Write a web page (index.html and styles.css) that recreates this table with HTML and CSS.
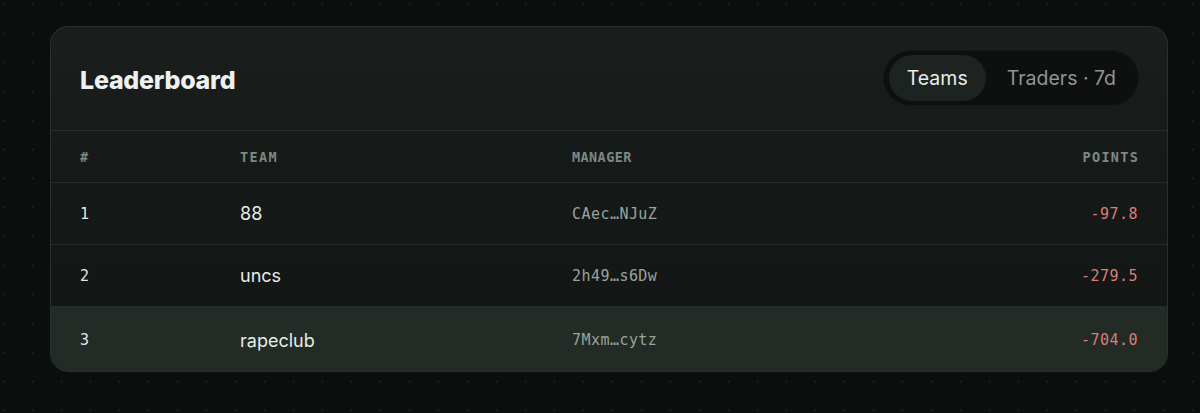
FILE: index.html
```html
<!DOCTYPE html>
<html lang="en">
<head>
<meta charset="utf-8">
<title>Leaderboard</title>
<link rel="stylesheet" href="styles.css">
</head>
<body>
<main class="page">
  <section class="card">
    <header class="card-head">
      <h1 class="title">Leaderboard</h1>
      <div class="toggle">
        <button class="tab active">Teams</button>
        <button class="tab">Traders · 7d</button>
      </div>
    </header>
    <div class="table">
      <div class="row head">
        <span class="c-rank">#</span>
        <span class="c-team">Team</span>
        <span class="c-mgr">Manager</span>
        <span class="c-pts">Points</span>
      </div>
      <div class="row">
        <span class="c-rank">1</span>
        <span class="c-team">88</span>
        <span class="c-mgr">CAec…NJuZ</span>
        <span class="c-pts neg">-97.8</span>
      </div>
      <div class="row">
        <span class="c-rank">2</span>
        <span class="c-team">uncs</span>
        <span class="c-mgr">2h49…s6Dw</span>
        <span class="c-pts neg">-279.5</span>
      </div>
      <div class="row mine">
        <span class="c-rank">3</span>
        <span class="c-team">rapeclub</span>
        <span class="c-mgr">7Mxm…cytz</span>
        <span class="c-pts neg">-704.0</span>
      </div>
    </div>
  </section>
</main>
</body>
</html>
```

FILE: styles.css
```css
* { box-sizing: border-box; }
html, body { margin: 0; padding: 0; }
body {
  width: 1200px;
  height: 413px;
  overflow: hidden;
  background-color: #0c0e0d;
  background-image: radial-gradient(circle, rgba(255,255,255,0.07) 0.9px, transparent 1.4px);
  background-size: 29px 29px;
  background-position: -11px -10px;
  font-family: Inter, "Noto Sans", sans-serif;
}
.page {
  padding: 26px 32px 0 50px;
}
.card {
  width: 1118px;
  border: 1px solid #2a312d;
  border-radius: 18px;
  background: linear-gradient(180deg, #1a1f1d 0%, #151917 45%, #121513 100%);
  overflow: hidden;
}
.card-head {
  height: 104px;
  display: flex;
  align-items: center;
  justify-content: space-between;
  padding: 0 28px 0 29px;
  border-bottom: 1px solid #272e2a;
}
.title {
  margin: 0;
  font-size: 25px;
  font-weight: 800;
  letter-spacing: -0.01em;
  color: #eef1ef;
  padding-top: 2px;
}
.toggle {
  display: flex;
  align-items: center;
  height: 56px;
  padding: 5px;
  border-radius: 28px;
  background: #0d100f;
  border: 1px solid #141816;
  margin-top: -2px;
}
.tab {
  height: 46px;
  border: 0;
  border-radius: 23px;
  background: transparent;
  font-family: Inter, "Noto Sans", sans-serif;
  font-size: 19.5px;
  font-weight: 400;
  color: #8d9792;
  padding: 0 17px 0 21px;
  cursor: pointer;
}
.tab.active {
  background: #1d2321;
  color: #e9edea;
  padding: 0 18px;
}
.row {
  display: grid;
  grid-template-columns: 160px 332px 1fr 200px;
  align-items: center;
  height: 62px;
  padding: 0 29px;
  border-bottom: 1px solid #262d29;
  font-family: "DejaVu Sans Mono", "Liberation Mono", monospace;
  font-size: 15px;
  color: #9aa39e;
}
.row.head {
  height: 52px;
  font-size: 13.5px;
  font-weight: 700;
  letter-spacing: 0.1em;
  text-transform: uppercase;
  color: #7f8984;
}
.row.mine {
  background: #222b25;
  border-bottom: 0;
  height: 64px;
  padding-top: 2px;
}
.c-rank { color: #e4e8e5; font-size: 15px; }
.row.head .c-rank { color: #7f8984; font-size: 13.5px; }
.c-team {
  font-family: Inter, "Noto Sans", sans-serif;
  font-size: 18px;
  color: #e8ece9;
}
.row.head .c-team {
  font-family: "DejaVu Sans Mono", "Liberation Mono", monospace;
  font-size: 13.5px;
  color: #7f8984;
}
.c-mgr { letter-spacing: 0.03em; }
.c-pts { text-align: right; letter-spacing: 0.03em; }
.row.head .c-pts { letter-spacing: 0.1em; margin-right: -1.3px; }
.neg { color: #dc7d76; }
```
